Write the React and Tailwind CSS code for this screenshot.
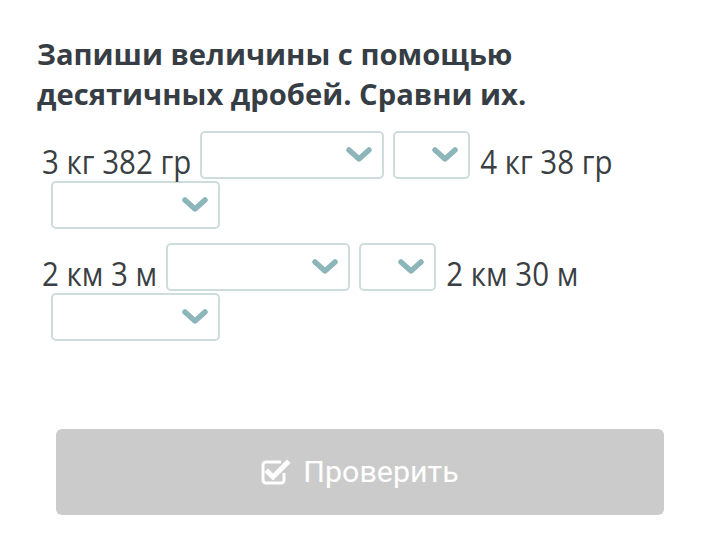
import { useState } from 'react';

function Chevron() {
  return (
    <svg width="26" height="16" viewBox="0 0 26 16" className="shrink-0">
      <polyline points="3,3 13,12 23,3" fill="none" stroke="#8cb6ba" strokeWidth="5.5" strokeLinecap="round" strokeLinejoin="round" />
    </svg>
  );
}

function Select({ w, className = '' }) {
  return (
    <div className={`${w} h-[48px] flex items-center justify-end pr-[10px] border-2 border-[#cddcdc] rounded-[5px] bg-white ${className}`}>
      <Chevron />
    </div>
  );
}

function Row({ left, right }) {
  return (
    <div className="flex flex-wrap items-center gap-y-[1px] text-[29.5px] text-[#3a3f44]">
      <span className="inline-block leading-[48px] translate-y-[7px] scale-y-[1.13]">{left}</span>
      <Select w="w-[184px]" className="ml-[9px]" />
      <Select w="w-[77px]" className="ml-[9px]" />
      <span className="inline-block ml-[10px] leading-[48px] translate-y-[7px] scale-y-[1.13]">{right}</span>
      <div className="basis-full h-0" />
      <Select w="w-[169px]" className="ml-[9px]" />
    </div>
  );
}

export default function App() {
  const [checked] = useState(false);

  return (
    <div className="w-[720px] h-[553px] bg-white" style={{ fontFamily: '"Open Sans", sans-serif' }}>
      <div className="pt-[34px] pl-[37px]">
        <h1 className="text-[29.2px] font-bold leading-[40px] text-[#363d44]">
          Запиши величины с помощью<br />десятичных дробей. Сравни их.
        </h1>
      </div>

      <div className="pl-[42px] pt-[17px] flex flex-col gap-[14px]">
        <Row left="3 кг 382 гр" right="4 кг 38 гр" />
        <Row left="2 км 3 м" right="2 км 30 м" />
      </div>

      <div className="px-[56px] pt-[88px]">
        <button
          disabled={!checked}
          className="w-[608px] h-[86px] rounded-[6px] bg-[#cbcbcb] flex items-center justify-center gap-[12px] text-white text-[30.4px]"
          style={{ fontFamily: 'Roboto, sans-serif' }}
        >
          <svg width="30" height="28" viewBox="0 0 30 28">
            <path d="M20 4 H5 a3 3 0 0 0 -3 3 v15 a3 3 0 0 0 3 3 h15 a3 3 0 0 0 3 -3 v-7" fill="none" stroke="white" strokeWidth="3" />
            <polyline points="7,14 12,19 26,5" fill="none" stroke="white" strokeWidth="5" strokeLinecap="square" />
          </svg>
          Проверить
        </button>
      </div>
    </div>
  );
}
